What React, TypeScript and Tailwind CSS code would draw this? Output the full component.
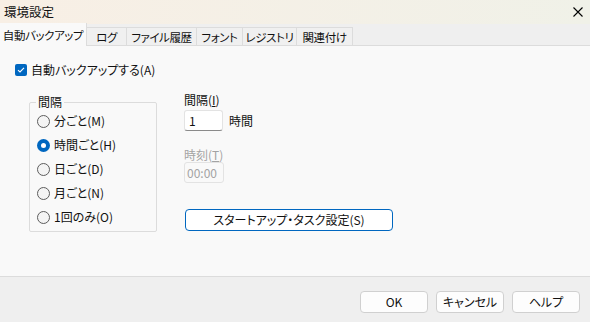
import React from "react";

const tabs = [
  { label: "自動バックアップ", w: "w-[87px]" },
  { label: "ログ", w: "w-[40px]" },
  { label: "ファイル履歴", w: "w-[70px]" },
  { label: "フォント", w: "w-[46px]" },
  { label: "レジストリ", w: "w-[54px]" },
  { label: "関連付け", w: "w-[56px]" },
];

const radios = ["分ごと(M)", "時間ごと(H)", "日ごと(D)", "月ごと(N)", "1回のみ(O)"];

function Radio({ checked, label }: { checked: boolean; label: string }) {
  return (
    <div className="flex h-[24px] items-center gap-[4px]">
      {checked ? (
        <span className="flex h-[13px] w-[13px] items-center justify-center rounded-full bg-[#0067c0]">
          <span className="h-[5px] w-[5px] rounded-full bg-white" />
        </span>
      ) : (
        <span className="h-[13px] w-[13px] rounded-full border border-[#5d5d5d] bg-[#f4f4f4]" />
      )}
      <span>{label}</span>
    </div>
  );
}

export default function App() {
  return (
    <div className="flex h-[322px] w-[590px] flex-col bg-[#f9f9f9] text-[12px] leading-[16px] text-[#111] [font-family:'Noto_Sans_CJK_JP',sans-serif] [font-feature-settings:'palt']">
      {/* title bar */}
      <div className="flex h-[24px] items-center justify-between bg-gradient-to-r from-[#f8efe5] to-[#f0f1e8] pl-[4px] pr-[7px]">
        <span className="text-[12.5px]">環境設定</span>
        <svg width="10" height="10" viewBox="0 0 10 10" className="text-black">
          <path d="M0.5 0.5 L9.5 9.5 M9.5 0.5 L0.5 9.5" stroke="currentColor" strokeWidth="1.1" />
        </svg>
      </div>

      {/* tabs */}
      <div className="flex h-[22px] items-end whitespace-nowrap border-b border-[#dcdcdc] bg-[#efefef] text-[11.5px] tracking-[-0.4px]">
        {tabs.map((t, i) =>
          i === 0 ? (
            <div key={t.label} className={`${t.w} -mb-px flex h-[23px] items-center justify-center border-r border-[#dcdcdc] bg-[#f9f9f9] pt-[1px]`}>
              {t.label}
            </div>
          ) : (
            <div key={t.label} className={`${t.w} flex h-[18px] items-center justify-center border-r border-t border-[#dcdcdc] bg-[#f0f0f0] pt-[1px]`}>
              {t.label}
            </div>
          )
        )}
      </div>

      {/* content */}
      <div className="flex-1 pl-[15px] pt-[16px]">
        <div className="flex h-[16px] items-center gap-[4px]">
          <span className="flex h-[12px] w-[12px] items-center justify-center rounded-[2px] bg-[#0067c0]">
            <svg width="8" height="8" viewBox="0 0 8 8">
              <path d="M1 4.2 L3 6 L7 1.8" fill="none" stroke="white" strokeWidth="1.1" />
            </svg>
          </span>
          <span>自動バックアップする(A)</span>
        </div>

        <div className="mt-[15px] flex items-start gap-[27px] pl-[14px]">
          {/* group box */}
          <div className="relative mt-[9px] h-[130px] w-[128px] rounded-[2px] border border-[#dcdcdc] pl-[7px] pt-[6px]">
            <span className="absolute -top-[9px] left-[6px] bg-[#f9f9f9] px-[2px]">間隔</span>
            {radios.map((r, i) => (
              <Radio key={r} checked={i === 1} label={r} />
            ))}
          </div>

          {/* right column */}
          <div className="flex w-[210px] flex-col">
            <span className="h-[14px] leading-[14px]">
              間隔(<span className="underline">I</span>)
            </span>
            <div className="mt-[3px] flex items-center gap-[6px]">
              <div className="flex h-[21px] w-[39px] items-center rounded-[3px] border border-[#e3e3e3] border-b-[#8a8a8a] bg-white pl-[4px]">
                1
              </div>
              <span>時間</span>
            </div>
            <span className="mt-[17px] h-[14px] leading-[14px] text-[#a3a3a3]">
              時刻(<span className="underline">T</span>)
            </span>
            <div className="mt-0 flex h-[21px] w-[40px] items-center rounded-[3px] border border-[#e3e3e3] bg-[#f9f9f9] pl-[2px] text-[#a3a3a3]">
              00:00
            </div>
            <div className="ml-[1px] mt-[26px] flex h-[22px] w-[208px] items-center justify-center rounded-[4px] border border-[#0067c0] bg-white">
              スタートアップ・タスク設定(S)
            </div>
          </div>
        </div>
      </div>

      {/* bottom bar */}
      <div className="flex h-[46px] items-start justify-end gap-[8px] border-t border-[#dcdcdc] bg-[#efefef] pr-[10px] pt-[14px]">
        {["OK", "キャンセル", "ヘルプ"].map((b) => (
          <div key={b} className="flex h-[22px] w-[68px] items-center justify-center rounded-[4px] border border-[#d0d0d0] bg-[#fdfdfd]">
            {b}
          </div>
        ))}
      </div>
    </div>
  );
}
